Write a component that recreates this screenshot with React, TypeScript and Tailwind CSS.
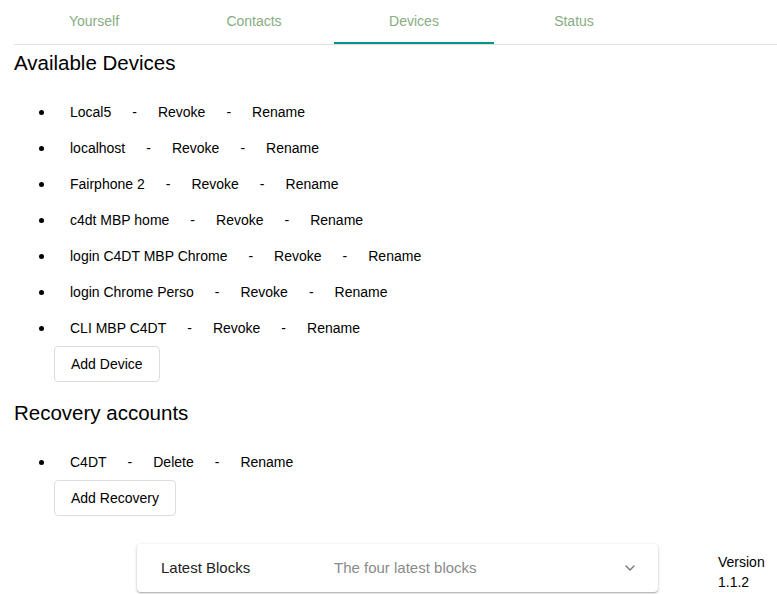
import { ChevronDown } from 'lucide-react';

const tabs = ['Yourself', 'Contacts', 'Devices', 'Status'];

const devices = [
  'Local5',
  'localhost',
  'Fairphone 2',
  'c4dt MBP home',
  'login C4DT MBP Chrome',
  'login Chrome Perso',
  'CLI MBP C4DT',
];

function Item({ name, action }: { name: string; action: string }) {
  return (
    <li className="flex items-center h-9 text-[14px] text-black">
      <span className="ml-[39px] w-[5px] h-[5px] rounded-full bg-black" />
      <span className="ml-[26px]">{name}</span>
      <span className="mx-[21px]">-</span>
      <span>{action}</span>
      <span className="mx-[21px]">-</span>
      <span>Rename</span>
    </li>
  );
}

function OutlineButton({ label }: { label: string }) {
  return (
    <button className="ml-[54px] h-[36px] px-[16px] border border-[#dcdcdc] rounded-[4px] bg-white text-[14px] text-black">
      {label}
    </button>
  );
}

export default function App() {
  return (
    <div className="w-[777px] h-[594px] overflow-hidden bg-white" style={{ fontFamily: '"Liberation Sans", Arial, sans-serif' }}>
      <div className="ml-[14px] flex border-b border-[#e0e0e0]">
        {tabs.map((tab) => (
          <div
            key={tab}
            className={`w-[160px] h-[44px] flex items-center justify-center border-b-2 text-[14px] text-[#86ad83] ${
              tab === 'Devices' ? 'border-[#009688]' : 'border-transparent'
            }`}
          >
            {tab}
          </div>
        ))}
      </div>

      <h2 className="ml-[14px] mt-[4px] text-[20.5px] leading-7 text-black">Available Devices</h2>
      <ul className="mt-[17px]">
        {devices.map((d) => (
          <Item key={d} name={d} action="Revoke" />
        ))}
      </ul>
      <OutlineButton label="Add Device" />

      <h2 className="ml-[14px] mt-[17px] text-[20.5px] leading-7 text-black">Recovery accounts</h2>
      <ul className="mt-[17px]">
        <Item name="C4DT" action="Delete" />
      </ul>
      <OutlineButton label="Add Recovery" />

      <div className="mt-[28px] flex items-start">
        <div className="ml-[137px] w-[521px] h-[48px] flex items-center rounded-[4px] bg-white shadow-[0_1px_3px_rgba(0,0,0,0.25),0_1px_1px_rgba(0,0,0,0.14)]">
          <span className="ml-[24px] w-[173px] text-[15px] text-[#222]">Latest Blocks</span>
          <span className="text-[15px] text-[#8a8a8a]">The four latest blocks</span>
          <ChevronDown className="ml-auto mr-[20px] w-[16px] h-[16px] text-[#757575]" strokeWidth={2} />
        </div>
        <div className="ml-[60px] mt-[8px] text-[14px] leading-5 text-black">
          <div>Version</div>
          <div>1.1.2</div>
        </div>
      </div>
    </div>
  );
}
